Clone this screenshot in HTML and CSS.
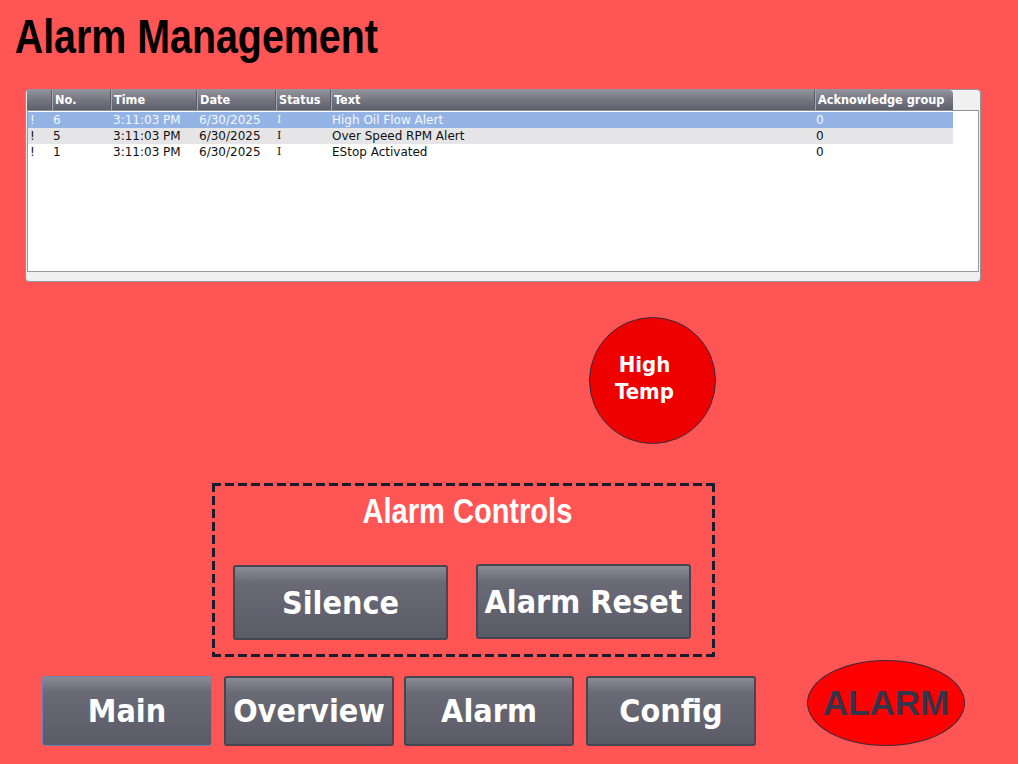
FILE: index.html
```html
<!DOCTYPE html>
<html>
<head>
<meta charset="utf-8">
<link rel="stylesheet" href="styles.css">
</head>
<body>
<div class="screen">
  <h1 class="title">Alarm Management</h1>

  <div class="alarm-view">
    <div class="hdr">
      <div class="hc"></div>
      <div class="hc">No.</div>
      <div class="hc">Time</div>
      <div class="hc">Date</div>
      <div class="hc">Status</div>
      <div class="hc">Text</div>
      <div class="hc">Acknowledge group</div>
    </div>
    <div class="list">
      <div class="row sel">
        <div>!</div><div>6</div><div>3:11:03 PM</div><div>6/30/2025</div><div>I</div><div>High Oil Flow Alert</div><div>0</div>
      </div>
      <div class="row alt">
        <div>!</div><div>5</div><div>3:11:03 PM</div><div>6/30/2025</div><div>I</div><div>Over Speed RPM Alert</div><div>0</div>
      </div>
      <div class="row">
        <div>!</div><div>1</div><div>3:11:03 PM</div><div>6/30/2025</div><div>I</div><div>EStop Activated</div><div>0</div>
      </div>
    </div>
  </div>

  <div class="indicator-row">
    <div class="lamp">High<br>Temp</div>
  </div>

  <div class="controls">
    <div class="controls-title"><span>Alarm Controls</span></div>
    <div class="controls-buttons">
      <button class="btn big">Silence</button>
      <button class="btn big reset">Alarm Reset</button>
    </div>
  </div>

  <div class="bottom">
    <nav class="nav">
      <button class="btn nav-btn active">Main</button>
      <button class="btn nav-btn">Overview</button>
      <button class="btn nav-btn">Alarm</button>
      <button class="btn nav-btn">Config</button>
    </nav>
    <div class="alarm-oval">ALARM</div>
  </div>
</div>
</body>
</html>
```

FILE: styles.css
```css
* { box-sizing: border-box; }
html, body { margin: 0; padding: 0; }
body {
  background: #ff5555;
  width: 1018px;
  height: 764px;
  overflow: hidden;
}
.screen {
  display: flex;
  flex-direction: column;
  align-items: flex-start;
}
.title {
  margin: 0;
  padding: 10px 0 0 18px;
  height: 89px;
  font-family: "Liberation Sans", Arial, sans-serif;
  font-weight: bold;
  font-size: 48px;
  line-height: 54px;
  color: #000;
  transform: scaleX(0.82);
  transform-origin: 0 0;
  white-space: nowrap;
}

/* alarm view */
.alarm-view {
  margin-left: 25px;
  width: 956px;
  height: 193px;
  background: #f0f0f0;
  border: 1px solid #8e939c;
  border-radius: 4px;
  padding: 0 1px 0 1px;
  font-family: "DejaVu Sans", sans-serif;
  font-size: 12px;
}
.hdr {
  display: grid;
  grid-template-columns: 24px 59px 86px 79px 55px 484px 139px;
  height: 20px;
  width: 926px;
  background: linear-gradient(#92939d, #777884 45%, #5e5f6b);
  border-radius: 0 4px 0 0;
  color: #fff;
  font-family: "DejaVu Sans Condensed", "DejaVu Sans", sans-serif;
  font-weight: bold;
  font-size: 12.6px;
}
.hc {
  padding: 2px 0 0 3px;
  line-height: 16px;
  border-left: 1px solid #5b5c66;
  box-shadow: inset 1px 0 0 #a6a7b0;
  white-space: nowrap;
}
.hc:first-child { border-left: 0; box-shadow: none; }
.list {
  width: 952px;
  height: 162px;
  background: #fff;
  border: 1px solid #9a9ba2;
  border-top-color: #8d8e96;
  padding-top: 1px;
}
.row {
  display: grid;
  grid-template-columns: 23px 59px 86px 79px 55px 484px 139px;
  width: 925px;
  height: 16px;
  line-height: 16px;
  color: #111;
  white-space: nowrap;
}
.row > div { padding-left: 2px; }
.row > div:nth-child(3),
.row > div:nth-child(4) { padding-left: 3px; }
.row > div:nth-child(5) { font-family: "DejaVu Serif", serif; font-size: 11px; }
.row.sel { background: #93b3e4; color: #f4f7ff; }
.row.alt { background: #e5e5e8; }

/* lamp */
.indicator-row {
  margin-top: 35px;
  margin-left: 589px;
}
.lamp {
  width: 127px;
  height: 127px;
  border-radius: 50%;
  background: #ee0000;
  border: 1px solid #3a2a3a;
  color: #fff;
  font-family: "DejaVu Sans Condensed", "DejaVu Sans", sans-serif;
  font-weight: bold;
  font-size: 22px;
  line-height: 27px;
  display: flex;
  align-items: center;
  justify-content: center;
  text-align: center;
  padding-right: 16px;
  padding-bottom: 6px;
}

/* controls */
.controls {
  margin-top: 39px;
  margin-left: 212px;
  width: 503px;
  height: 174px;
  padding: 3px;
  background:
    repeating-linear-gradient(90deg, #1c1c2c 0 9px, transparent 9px 13px) left top / 100% 3px no-repeat,
    repeating-linear-gradient(90deg, #1c1c2c 0 9px, transparent 9px 13px) left bottom / 100% 3px no-repeat,
    repeating-linear-gradient(180deg, #1c1c2c 0 9px, transparent 9px 13px) left top / 3px 100% no-repeat,
    repeating-linear-gradient(180deg, #1c1c2c 0 9px, transparent 9px 13px) right top / 3px 100% no-repeat;
  display: flex;
  flex-direction: column;
}
.controls-title {
  text-align: center;
  padding-left: 8px;
  margin-top: 5px;
  height: 40px;
  line-height: 40px;
  font-family: "Liberation Sans", Arial, sans-serif;
  font-weight: bold;
  font-size: 35px;
  color: #fff;
}
.controls-title span {
  display: inline-block;
  transform: scaleX(0.83);
  white-space: nowrap;
}
.controls-buttons {
  display: flex;
  align-items: flex-start;
  margin-top: 34px;
  padding-left: 18px;
  gap: 28px;
}
.btn {
  margin: 0;
  padding: 0;
  border: 2px solid #45464f;
  border-radius: 3px;
  background: linear-gradient(#8a8b95, #696a75 22%, #62636e 60%, #5a5b66);
  color: #fff;
  font-family: "DejaVu Sans Condensed", "DejaVu Sans", sans-serif;
  font-weight: bold;
  font-size: 32px;
  text-align: center;
  white-space: nowrap;
}
.btn.big {
  width: 215px;
  height: 75px;
}
.btn.reset { margin-top: -1px; }

/* bottom */
.bottom {
  margin-top: 3px;
  display: flex;
  align-items: flex-end;
}
.nav {
  display: flex;
  margin-left: 42px;
}
.nav-btn {
  width: 170px;
  height: 70px;
  margin-right: 12px;
}
.nav-btn:nth-child(2) { margin-right: 10px; }
.nav-btn:nth-child(3) { margin-right: 12px; }
.nav-btn.active {
  border: 1px solid #6c83b0;
}
.alarm-oval {
  margin-left: 39px;
  width: 158px;
  height: 86px;
  border-radius: 50%;
  background: #ff0000;
  border: 1px solid #3a2a3a;
  display: flex;
  align-items: center;
  justify-content: center;
  font-family: "Liberation Sans", Arial, sans-serif;
  font-weight: bold;
  font-size: 35px;
  color: #353448;
}
```
